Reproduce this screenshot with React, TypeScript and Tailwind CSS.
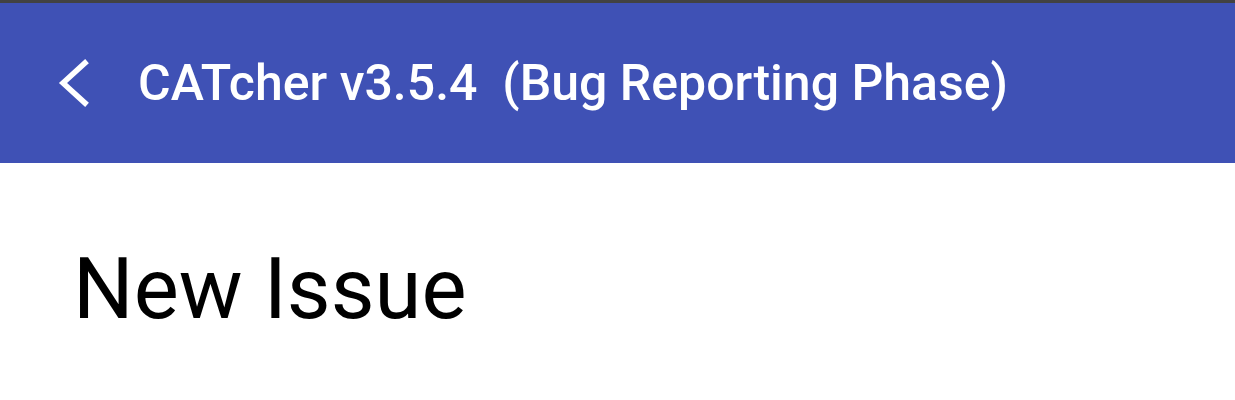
const App = () => {
  return (
    <div className="w-[1235px] h-[400px] bg-white" style={{ fontFamily: "Roboto, 'Liberation Sans', sans-serif" }}>
      <div className="h-[3px] bg-[#424242]" />
      <div className="h-[160px] bg-[#3f51b5] flex items-center pl-[57px] text-white">
        <svg width="34" height="48" viewBox="0 0 34 48" className="shrink-0">
          <polyline points="28,4 6,24 28,44" fill="none" stroke="white" strokeWidth="5.5" strokeLinecap="square" />
        </svg>
        <span className="ml-[47px] text-[50px] font-medium whitespace-pre leading-none">CATcher v3.5.4  (Bug Reporting Phase)</span>
      </div>
      <h1 className="pl-[73px] pt-[84px] text-[85px] font-normal leading-none text-black">New Issue</h1>
    </div>
  );
};

export default App;
